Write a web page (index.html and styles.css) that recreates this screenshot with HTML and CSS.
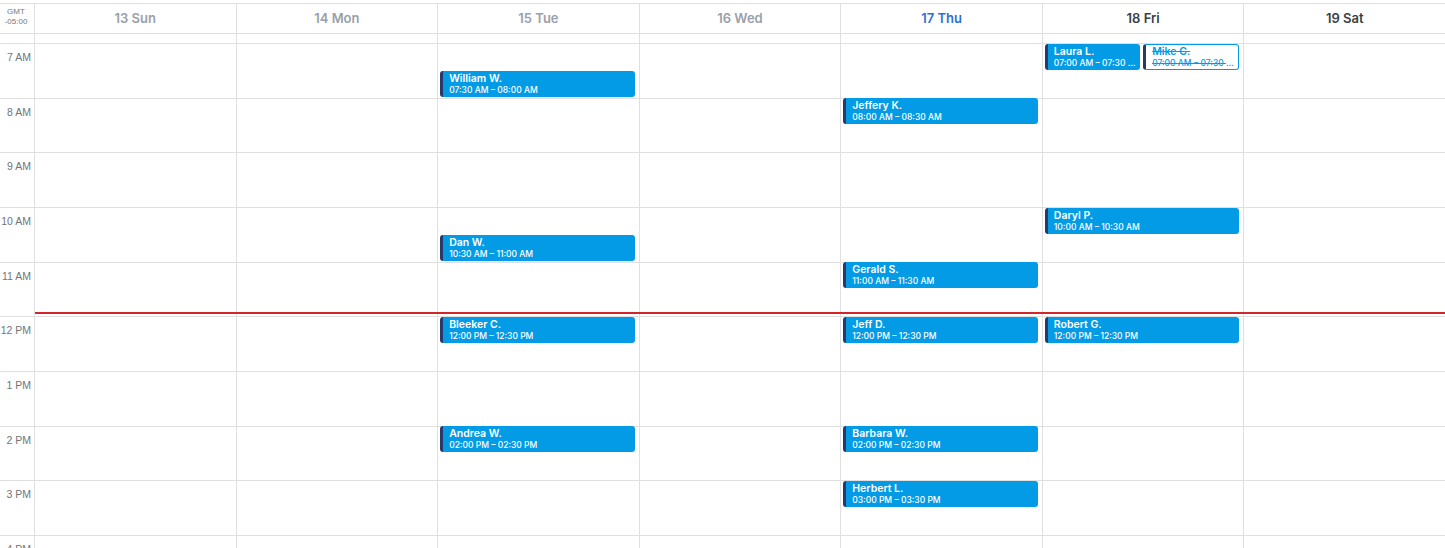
FILE: index.html
```html
<!DOCTYPE html>
<html>
<head>
<meta charset="utf-8">
<link rel="stylesheet" href="styles.css">
</head>
<body>
<div class="cal">
  <div class="head">
    <div class="tz">GMT<br>-05:00</div>
    <div class="day past">13 Sun</div>
    <div class="day past">14 Mon</div>
    <div class="day past">15 Tue</div>
    <div class="day past">16 Wed</div>
    <div class="day today">17 Thu</div>
    <div class="day">18 Fri</div>
    <div class="day">19 Sat</div>
  </div>
  <div class="allday">
    <div class="gut"></div>
    <div class="cell"></div><div class="cell"></div><div class="cell"></div><div class="cell"></div><div class="cell"></div><div class="cell"></div><div class="cell"></div>
  </div>
  <div class="body">
    <div class="hours">
      <div class="hour"><span>7 AM</span></div>
      <div class="hour"><span>8 AM</span></div>
      <div class="hour"><span>9 AM</span></div>
      <div class="hour"><span>10 AM</span></div>
      <div class="hour"><span>11 AM</span></div>
      <div class="hour"><span>12 PM</span></div>
      <div class="hour"><span>1 PM</span></div>
      <div class="hour"><span>2 PM</span></div>
      <div class="hour"><span>3 PM</span></div>
      <div class="hour"><span>4 PM</span></div>
    </div>
    <div class="col">
      <div class="slot"></div><div class="slot"></div><div class="slot"></div><div class="slot"></div><div class="slot"></div><div class="slot"></div><div class="slot"></div><div class="slot"></div><div class="slot"></div><div class="slot"></div>
    </div>
    <div class="col">
      <div class="slot"></div><div class="slot"></div><div class="slot"></div><div class="slot"></div><div class="slot"></div><div class="slot"></div><div class="slot"></div><div class="slot"></div><div class="slot"></div><div class="slot"></div>
    </div>
    <div class="col">
      <div class="slot"></div><div class="slot"></div><div class="slot"></div><div class="slot"></div><div class="slot"></div><div class="slot"></div><div class="slot"></div><div class="slot"></div><div class="slot"></div><div class="slot"></div>
      <div class="ev" style="top:27px"><div class="name">William W.</div><div class="time">07:30 AM – 08:00 AM</div></div>
      <div class="ev" style="top:191px"><div class="name">Dan W.</div><div class="time">10:30 AM – 11:00 AM</div></div>
      <div class="ev" style="top:273px"><div class="name">Bleeker C.</div><div class="time">12:00 PM – 12:30 PM</div></div>
      <div class="ev" style="top:382px"><div class="name">Andrea W.</div><div class="time">02:00 PM – 02:30 PM</div></div>
    </div>
    <div class="col">
      <div class="slot"></div><div class="slot"></div><div class="slot"></div><div class="slot"></div><div class="slot"></div><div class="slot"></div><div class="slot"></div><div class="slot"></div><div class="slot"></div><div class="slot"></div>
    </div>
    <div class="col">
      <div class="slot"></div><div class="slot"></div><div class="slot"></div><div class="slot"></div><div class="slot"></div><div class="slot"></div><div class="slot"></div><div class="slot"></div><div class="slot"></div><div class="slot"></div>
      <div class="ev" style="top:54px"><div class="name">Jeffery K.</div><div class="time">08:00 AM – 08:30 AM</div></div>
      <div class="ev" style="top:218px"><div class="name">Gerald S.</div><div class="time">11:00 AM – 11:30 AM</div></div>
      <div class="ev" style="top:273px"><div class="name">Jeff D.</div><div class="time">12:00 PM – 12:30 PM</div></div>
      <div class="ev" style="top:382px"><div class="name">Barbara W.</div><div class="time">02:00 PM – 02:30 PM</div></div>
      <div class="ev" style="top:437px"><div class="name">Herbert L.</div><div class="time">03:00 PM – 03:30 PM</div></div>
    </div>
    <div class="col">
      <div class="slot"></div><div class="slot"></div><div class="slot"></div><div class="slot"></div><div class="slot"></div><div class="slot"></div><div class="slot"></div><div class="slot"></div><div class="slot"></div><div class="slot"></div>
      <div class="ev half-a" style="top:0px"><div class="name">Laura L.</div><div class="time">07:00 AM – 07:30 AM</div></div>
      <div class="ev half-b cancelled" style="top:0px"><div class="name">Mike C.</div><div class="time">07:00 AM – 07:30 AM</div></div>
      <div class="ev" style="top:164px"><div class="name">Daryl P.</div><div class="time">10:00 AM – 10:30 AM</div></div>
      <div class="ev" style="top:273px"><div class="name">Robert G.</div><div class="time">12:00 PM – 12:30 PM</div></div>
    </div>
    <div class="col">
      <div class="slot"></div><div class="slot"></div><div class="slot"></div><div class="slot"></div><div class="slot"></div><div class="slot"></div><div class="slot"></div><div class="slot"></div><div class="slot"></div><div class="slot"></div>
    </div>
    <div class="now" style="top:268px"></div>
  </div>
</div>
</body>
</html>
```

FILE: styles.css
```css
html, body {
  margin: 0;
  padding: 0;
  overflow: hidden;
  background: #fff;
}
body {
  padding-top: 3px;
  font-family: Inter, "Noto Sans", sans-serif;
}
.cal {
  --hour: 54.667px;
  --line: #e0e0e0;
  width: 1445px;
}
.head {
  display: grid;
  grid-template-columns: 34px repeat(7, 1fr);
  height: 31px;
  box-sizing: border-box;
  border-top: 1px solid var(--line);
  border-bottom: 1px solid var(--line);
}
.tz {
  font-family: "Liberation Sans", Arial, sans-serif;
  font-size: 8px;
  line-height: 10px;
  color: #777;
  text-align: center;
  padding-top: 3px;
  padding-right: 2px;
}
.day {
  border-left: 1px solid var(--line);
  display: flex;
  align-items: center;
  justify-content: center;
  font-size: 13px;
  font-weight: 600;
  color: #3c4043;
  padding-bottom: 1px;
}
.day.past { color: #9aa0a9; }
.day.today { color: #2f6fd2; }
.allday {
  display: grid;
  grid-template-columns: 34px repeat(7, 1fr);
  height: 10px;
  box-sizing: border-box;
  border-bottom: 1px solid var(--line);
}
.allday .cell { border-left: 1px solid var(--line); }
.body {
  position: relative;
  display: grid;
  grid-template-columns: 34px repeat(7, 1fr);
  height: 504px;
  overflow: hidden;
}
.hour, .slot {
  height: var(--hour);
  box-sizing: border-box;
  border-bottom: 1px solid var(--line);
}
.hour {
  position: relative;
  font-family: "Liberation Sans", Arial, sans-serif;
  font-size: 10.5px;
  color: #70757a;
  text-align: right;
  white-space: nowrap;
  padding-right: 3px;
  padding-top: 7px;
}
.hours { border-right: 1px solid var(--line); margin-right: -1px; position: relative; z-index: 1; }
.col {
  position: relative;
  border-left: 1px solid var(--line);
}
.ev {
  position: absolute;
  left: 2px;
  right: 4px;
  height: 26px;
  box-sizing: border-box;
  background: #039be5;
  border-left: 3px solid #2b3969;
  border-radius: 3px;
  color: #fff;
  padding: 2px 0 0 6px;
  overflow: hidden;
  white-space: nowrap;
}
.ev .name {
  font-size: 10.5px;
  font-weight: 600;
  line-height: 12px;
}
.ev .time {
  font-size: 8.5px;
  font-weight: 500;
  line-height: 10px;
  overflow: hidden;
  text-overflow: ellipsis;
}
.ev.half-a {
  right: auto;
  width: calc(50% - 5px);
}
.ev.half-b {
  left: auto;
  right: 4px;
  width: calc(50% - 4px);
}
.ev.cancelled {
  background: #fff;
  border: 1px solid #039be5;
  border-left: 3px solid #2b3969;
  color: #039be5;
  text-decoration: line-through;
  padding-top: 1px;
}
.now {
  position: absolute;
  left: 35px;
  right: 0;
  height: 0;
  border-top: 2px solid #d3262a;
  z-index: 2;
}
```
